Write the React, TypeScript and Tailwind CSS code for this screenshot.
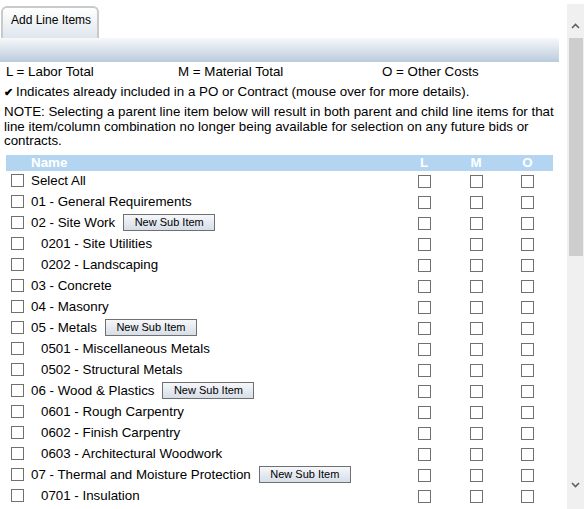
const rows: { label: string; child?: boolean; sub?: boolean }[] = [
  { label: "Select All" },
  { label: "01 - General Requirements" },
  { label: "02 - Site Work", sub: true },
  { label: "0201 - Site Utilities", child: true },
  { label: "0202 - Landscaping", child: true },
  { label: "03 - Concrete" },
  { label: "04 - Masonry" },
  { label: "05 - Metals", sub: true },
  { label: "0501 - Miscellaneous Metals", child: true },
  { label: "0502 - Structural Metals", child: true },
  { label: "06 - Wood & Plastics", sub: true },
  { label: "0601 - Rough Carpentry", child: true },
  { label: "0602 - Finish Carpentry", child: true },
  { label: "0603 - Architectural Woodwork", child: true },
  { label: "07 - Thermal and Moisture Protection", sub: true },
  { label: "0701 - Insulation", child: true },
];

function Box() {
  return <span className="block w-[13px] h-[13px] border border-[#707070] bg-white" />;
}

function Chevron({ down }: { down?: boolean }) {
  return (
    <svg width="9" height="6" viewBox="0 0 9 6" className="block">
      <path
        d={down ? "M1 1 L4.5 4.5 L8 1" : "M1 5 L4.5 1.5 L8 5"}
        fill="none"
        stroke="#606060"
        strokeWidth="1.6"
      />
    </svg>
  );
}

export default function App() {
  return (
    <div className="flex w-[584px] h-[509px] bg-white overflow-hidden font-['Liberation_Sans',Arial,sans-serif] text-black">
      <main className="w-[567px] h-[509px] overflow-hidden">
        {/* tab */}
        <div className="pt-[6px] pl-[1px]">
          <div className="w-[98px] h-[32px] rounded-t-[6px] border-2 border-b-0 border-[#cacaca] bg-gradient-to-b from-white to-[#dfe6ee] pl-[8px] pt-[5px] text-[12px] leading-[15px]">
            Add Line Items
          </div>
        </div>
        <div className="w-[559px] h-[24px] bg-gradient-to-b from-[#f7f8fa] to-[#bbcbdc]" />

        {/* legend */}
        <div className="flex pl-[6px] mt-[3px] text-[13.333px] leading-[14px]">
          <span className="w-[172px]">L = Labor Total</span>
          <span className="w-[204px]">M = Material Total</span>
          <span>O = Other Costs</span>
        </div>
        <div className="flex items-center pl-[4px] mt-[6px] text-[13.333px] leading-[14px]">
          <span className="w-[12px] text-[11px] font-bold">✔</span>
          <span>Indicates already included in a PO or Contract (mouse over for more details).</span>
        </div>
        <p className="pl-[4px] w-[562px] mt-[6px] text-[13.333px] leading-[14.5px]">
          NOTE: Selecting a parent line item below will result in both parent and child line items for that
          line item/column combination no longer being available for selection on any future bids or
          contracts.
        </p>

        {/* table */}
        <div className="ml-[6px] w-[547px] mt-[6px] text-[13.333px]">
          <div className="grid grid-cols-[392px_52px_52px_51px] h-[16px] bg-[#b4d5f1] text-white font-bold leading-[16px]">
            <span className="pl-[25px]">Name</span>
            <span className="text-center">L</span>
            <span className="text-center">M</span>
            <span className="text-center">O</span>
          </div>
          {rows.map((r) => (
            <div key={r.label} className="grid grid-cols-[392px_52px_52px_51px] h-[21px] items-center">
              <div className="flex items-center pl-[5px]">
                <Box />
                <span className={r.child ? "ml-[17px]" : "ml-[7px]"}>{r.label}</span>
                {r.sub && (
                  <button className="ml-[8px] w-[92px] h-[17px] border border-[#707070] bg-gradient-to-b from-[#f6f7f9] to-[#d6dee8] text-[11px] leading-[15px] text-black">
                    New Sub Item
                  </button>
                )}
              </div>
              <div className="flex justify-center"><Box /></div>
              <div className="flex justify-center"><Box /></div>
              <div className="flex justify-center"><Box /></div>
            </div>
          ))}
        </div>
      </main>

      {/* scrollbar */}
      <div className="w-[17px] h-[505px] mt-[4px] bg-[#f0f0f0] flex flex-col items-center">
        <div className="h-[34px] pt-[10px] flex items-center justify-center">
          <Chevron />
        </div>
        <div className="w-[14px] h-[218px] bg-[#cdcdcd] ml-[1px]" />
        <div className="flex-1" />
        <div className="h-[34px] pb-[14px] flex items-center justify-center">
          <Chevron down />
        </div>
      </div>
    </div>
  );
}
